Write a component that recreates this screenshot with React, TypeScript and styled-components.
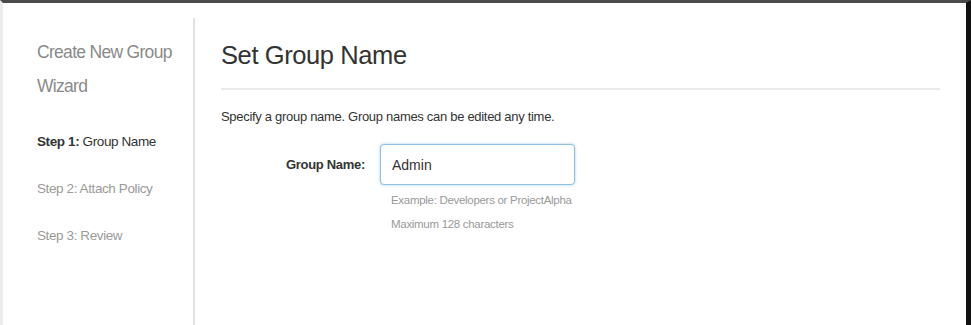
import React, { FC } from "react";
import styled, { createGlobalStyle } from "styled-components";

const GlobalStyle = createGlobalStyle`
  html, body {
    margin: 0;
    padding: 0;
    background: #fff;
  }
  body {
    font-family: "Liberation Sans", Arial, Helvetica, sans-serif;
    color: #333;
  }
`;

type Step = {
  num: number;
  label: string;
};

const steps: Step[] = [
  { num: 1, label: "Group Name" },
  { num: 2, label: "Attach Policy" },
  { num: 3, label: "Review" },
];

const App: FC = () => {
  const current = 1;
  return (
    <>
      <GlobalStyle />
      <SFrame>
        <SSidebar>
          <SWizardTitle>
            Create New Group
            <br />
            Wizard
          </SWizardTitle>
          <SStepList>
            {steps.map((s) => (
              <SStep key={s.num} $active={s.num === current}>
                <SStepNum $active={s.num === current}>Step {s.num}:</SStepNum>{" "}
                {s.label}
              </SStep>
            ))}
          </SStepList>
        </SSidebar>
        <SMain>
          <SHeading>Set Group Name</SHeading>
          <SIntro>Specify a group name. Group names can be edited any time.</SIntro>
          <SFormRow>
            <SLabel htmlFor="group-name">Group Name:</SLabel>
            <SField>
              <SInput id="group-name" defaultValue="Admin" />
              <SHint>Example: Developers or ProjectAlpha</SHint>
              <SHint>Maximum 128 characters</SHint>
            </SField>
          </SFormRow>
        </SMain>
      </SFrame>
    </>
  );
};

const SFrame = styled.div`
  box-sizing: border-box;
  width: 971px;
  height: 325px;
  display: flex;
  padding-top: 15px;
  border-top: 3px solid #4b4b4b;
  border-left: 3px solid #ececec;
  border-right: 5px solid #111;
  overflow: hidden;
`;

const SSidebar = styled.aside`
  width: 192px;
  flex-shrink: 0;
  box-sizing: border-box;
  padding: 17px 0 0 34px;
  border-right: 2px solid #e2e2e2;
`;

const SWizardTitle = styled.div`
  font-size: 17.5px;
  line-height: 34px;
  color: #8a8a8a;
  letter-spacing: -0.7px;
`;

const SStepList = styled.ul`
  list-style: none;
  margin: 29px 0 0;
  padding: 0;
  display: flex;
  flex-direction: column;
  gap: 27px;
`;

const SStep = styled.li<{ $active: boolean }>`
  font-size: 13.5px;
  line-height: 20px;
  letter-spacing: -0.4px;
  color: ${(p) => (p.$active ? "#333" : "#9a9a9a")};
`;

const SStepNum = styled.span<{ $active: boolean }>`
  font-weight: ${(p) => (p.$active ? 700 : 400)};
`;

const SMain = styled.main`
  flex: 1;
  padding: 22px 26px 0 26px;
`;

const SHeading = styled.h1`
  margin: 0;
  padding-bottom: 18px;
  border-bottom: 2px solid #e9e9e9;
  font-size: 25.5px;
  line-height: 30px;
  font-weight: 400;
  letter-spacing: -0.4px;
  color: #333;
`;

const SIntro = styled.p`
  margin: 18px 0 0;
  font-size: 13px;
  line-height: 18px;
  letter-spacing: -0.3px;
  color: #333;
`;

const SFormRow = styled.div`
  display: flex;
  align-items: flex-start;
  gap: 15px;
  margin-top: 18px;
`;

const SLabel = styled.label`
  width: 144px;
  text-align: right;
  font-size: 13px;
  font-weight: 700;
  line-height: 41px;
  letter-spacing: -0.3px;
  color: #333;
`;

const SField = styled.div`
  display: flex;
  flex-direction: column;
`;

const SInput = styled.input`
  box-sizing: border-box;
  width: 195px;
  height: 41px;
  padding: 0 11px;
  border: 1px solid #8fbfe3;
  border-radius: 4px;
  box-shadow: 0 0 3px rgba(102, 170, 220, 0.6);
  outline: none;
  font-family: "Liberation Sans", Arial, sans-serif;
  font-size: 14px;
  color: #333;
`;

const SHint = styled.div`
  padding-left: 11px;
  font-size: 11.5px;
  line-height: 24px;
  letter-spacing: -0.3px;
  color: #999;
  &:first-of-type {
    margin-top: 3px;
  }
`;

export default App;
